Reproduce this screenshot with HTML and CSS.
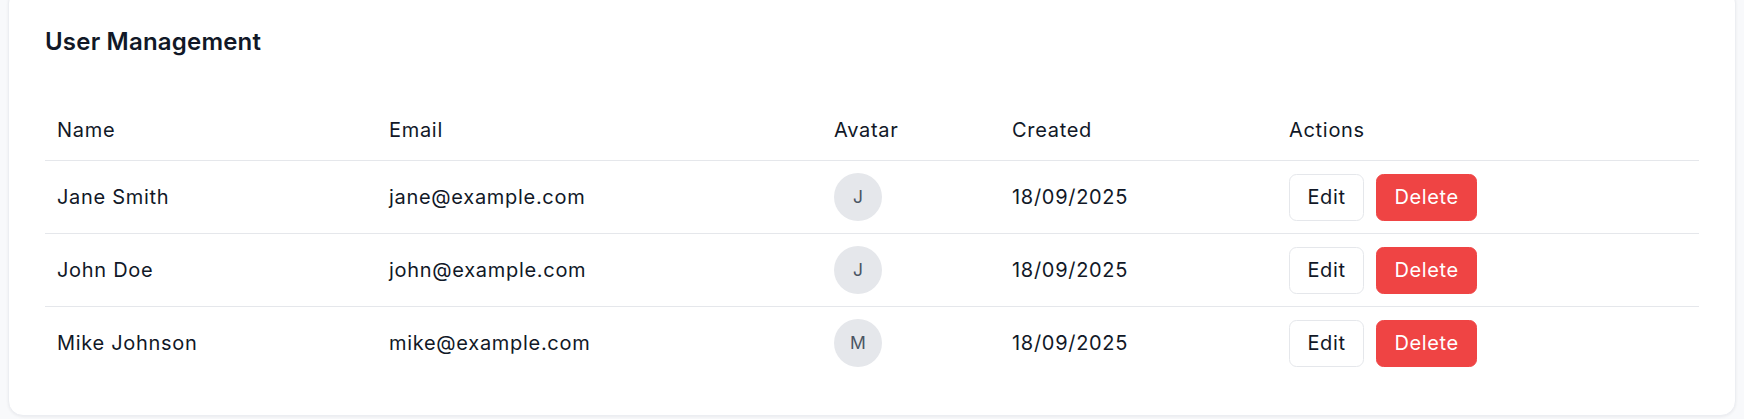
FILE: index.html
```html
<!DOCTYPE html>
<html lang="en">
<head>
<meta charset="utf-8">
<title>User Management</title>
<link rel="stylesheet" href="styles.css">
</head>
<body>
<main class="page">
  <section class="card">
    <h2 class="card-title">User Management</h2>
    <table class="users">
      <colgroup>
        <col class="col-name">
        <col class="col-email">
        <col class="col-avatar">
        <col class="col-created">
        <col class="col-actions">
      </colgroup>
      <thead>
        <tr>
          <th>Name</th>
          <th>Email</th>
          <th>Avatar</th>
          <th>Created</th>
          <th>Actions</th>
        </tr>
      </thead>
      <tbody>
        <tr>
          <td>Jane Smith</td>
          <td>jane@example.com</td>
          <td><span class="avatar">J</span></td>
          <td>18/09/2025</td>
          <td><div class="actions"><button class="btn btn-edit">Edit</button><button class="btn btn-delete">Delete</button></div></td>
        </tr>
        <tr>
          <td>John Doe</td>
          <td>john@example.com</td>
          <td><span class="avatar">J</span></td>
          <td>18/09/2025</td>
          <td><div class="actions"><button class="btn btn-edit">Edit</button><button class="btn btn-delete">Delete</button></div></td>
        </tr>
        <tr>
          <td>Mike Johnson</td>
          <td>mike@example.com</td>
          <td><span class="avatar">M</span></td>
          <td>18/09/2025</td>
          <td><div class="actions"><button class="btn btn-edit">Edit</button><button class="btn btn-delete">Delete</button></div></td>
        </tr>
      </tbody>
    </table>
  </section>
</main>
</body>
</html>
```

FILE: styles.css
```css
html, body {
  margin: 0;
  padding: 0;
  background: #f8f9fb;
}

body {
  font-family: Inter, "Noto Sans", "Liberation Sans", sans-serif;
  color: #111827;
  overflow: hidden;
}

.page {
  padding: 0 8px 8px;
}

.card {
  margin-top: -12px;
  background: #ffffff;
  border: 1px solid #eceef2;
  border-radius: 15px;
  box-shadow: 0 1px 3px rgba(17, 24, 39, 0.06);
  padding: 36px;
}

.card-title {
  margin: 0 0 41px;
  font-size: 24px;
  line-height: 34px;
  font-weight: 600;
  letter-spacing: 0.2px;
  color: #111827;
}

.users {
  width: 100%;
  border-collapse: collapse;
  table-layout: fixed;
}

.col-name { width: 332px; }
.col-email { width: 445px; }
.col-avatar { width: 178px; }
.col-created { width: 277px; }
.col-actions { width: auto; }

.users th {
  text-align: left;
  font-weight: 400;
  font-size: 20px;
  line-height: 32px;
  letter-spacing: 0.7px;
  padding: 14px 12px;
  border-bottom: 1px solid #e5e7eb;
  color: #111827;
}

.users td {
  font-size: 20px;
  line-height: 30px;
  letter-spacing: 0.7px;
  padding: 12px;
  vertical-align: middle;
  border-bottom: 1px solid #e5e7eb;
  color: #111827;
}

.users tbody tr:last-child td {
  border-bottom: none;
}

.avatar {
  display: flex;
  align-items: center;
  justify-content: center;
  width: 48px;
  height: 48px;
  border-radius: 50%;
  background: #e5e7eb;
  color: #4b5563;
  font-size: 17.5px;
  letter-spacing: 0;
}

.actions {
  display: flex;
  gap: 12px;
}

.btn {
  font-family: inherit;
  font-size: 20px;
  letter-spacing: 0.6px;
  height: 47px;
  padding: 0 17.5px;
  border-radius: 7.5px;
  border: 1px solid #e5e7eb;
  cursor: pointer;
}

.btn-edit {
  background: #ffffff;
  color: #111827;
}

.btn-delete {
  background: #ef4444;
  border-color: #ef4444;
  color: #ffffff;
}
```
